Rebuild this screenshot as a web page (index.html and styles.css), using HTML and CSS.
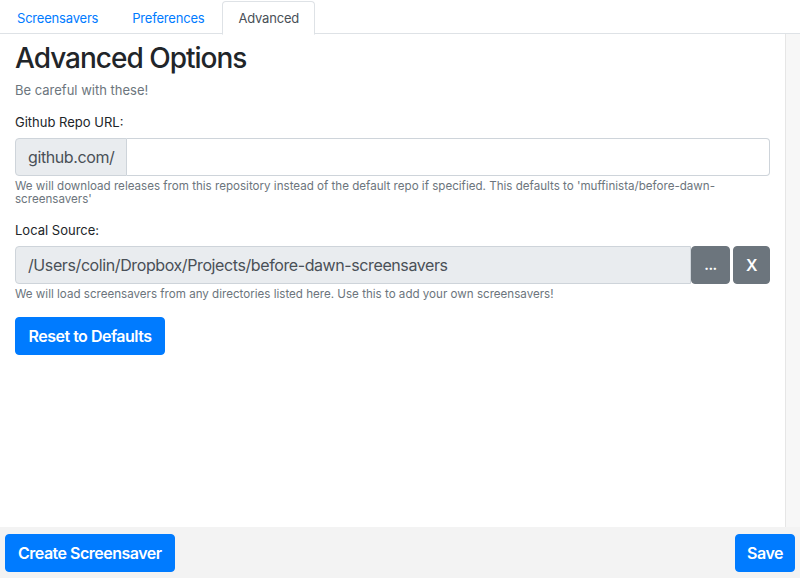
FILE: index.html
```html
<!DOCTYPE html>
<html>
<head>
<meta charset="utf-8">
<link rel="stylesheet" href="styles.css">
</head>
<body>
<div class="app">
  <ul class="tabs">
    <li class="tab"><a class="tab-link">Screensavers</a></li>
    <li class="tab"><a class="tab-link">Preferences</a></li>
    <li class="tab active"><a class="tab-link">Advanced</a></li>
  </ul>
  <div class="main">
    <div class="content">
      <h1 class="title">Advanced Options</h1>
      <p class="lead-muted">Be careful with these!</p>

      <div class="form-group">
        <label class="label">Github Repo URL:</label>
        <div class="input-group">
          <span class="prepend">github.com/</span>
          <input class="input" type="text" value="">
        </div>
        <small class="help">We will download releases from this repository instead of the default repo if specified. This defaults to 'muffinista/before-dawn-screensavers'</small>
      </div>

      <div class="form-group">
        <label class="label">Local Source:</label>
        <div class="input-group">
          <input class="input readonly" type="text" value="/Users/colin/Dropbox/Projects/before-dawn-screensavers" readonly>
          <button class="btn btn-gray btn-dots">...</button>
          <button class="btn btn-gray btn-x">X</button>
        </div>
        <small class="help">We will load screensavers from any directories listed here. Use this to add your own screensavers!</small>
      </div>

      <button class="btn btn-blue btn-reset">Reset to Defaults</button>
    </div>
    <div class="scrollbar"></div>
  </div>
  <div class="footer">
    <button class="btn btn-blue">Create Screensaver</button>
    <button class="btn btn-blue btn-save">Save</button>
  </div>
</div>
</body>
</html>
```
FILE: styles.css
```css
* { box-sizing: border-box; }
html, body { margin: 0; padding: 0; }
body {
  font-family: "Inter", "Liberation Sans", sans-serif;
  color: #212529;
  background: #fff;
}
.app {
  width: 800px;
  height: 578px;
  display: flex;
  flex-direction: column;
}
.tabs {
  list-style: none;
  margin: 0;
  padding: 1px 0 0 1px;
  display: flex;
  gap: 2px;
  border-bottom: 1px solid #dee2e6;
  height: 34px;
}
.tab { margin-bottom: -1px; }
.tab-link {
  display: block;
  padding: 7px 15px;
  font-size: 13px;
  line-height: 18px;
  letter-spacing: -0.2px;
  color: #007bff;
  border: 1px solid transparent;
  border-top-left-radius: 4px;
  border-top-right-radius: 4px;
}
.tab.active .tab-link {
  color: #495057;
  background: #fff;
  border-color: #dee2e6 #dee2e6 #fff;
}
.main {
  flex: 1;
  display: flex;
  min-height: 0;
}
.content {
  flex: 1;
  padding: 7px 15px 0 15px;
}
.scrollbar {
  width: 15px;
  background: #f7f7f7;
  border-left: 1px solid #e6e6e6;
}
.title {
  margin: 0;
  font-size: 28px;
  font-weight: 500;
  line-height: 34px;
  letter-spacing: -1px;
}
.lead-muted {
  margin: 6px 0 0;
  font-size: 13px;
  line-height: 18px;
  color: #6c757d;
}
.form-group { margin-top: 14px; }
.form-group + .form-group { margin-top: 15px; }
.label {
  display: block;
  font-size: 13px;
  line-height: 18px;
  margin-bottom: 7px;
}
.input-group {
  display: flex;
  height: 38px;
}
.prepend {
  display: flex;
  align-items: center;
  padding: 0 12px;
  font-size: 16px;
  letter-spacing: -0.4px;
  color: #495057;
  background: #e9ecef;
  border: 1px solid #ced4da;
  border-radius: 4px 0 0 4px;
}
.input {
  flex: 1;
  min-width: 0;
  font-family: inherit;
  font-size: 16px;
  letter-spacing: -0.4px;
  color: #495057;
  padding: 0 12px;
  border: 1px solid #ced4da;
  border-left: 0;
  border-radius: 0 4px 4px 0;
  background: #fff;
  outline: none;
}
.input.readonly {
  background: #e9ecef;
  border-left: 1px solid #ced4da;
  border-radius: 4px 0 0 4px;
}
.help {
  display: block;
  margin-top: 4px;
  font-size: 11.6px;
  line-height: 13px;
  color: #6c757d;
}
.btn {
  font-family: inherit;
  font-size: 16px;
  font-weight: 600;
  line-height: 24px;
  letter-spacing: -0.5px;
  padding: 6px 12px;
  border: 1px solid transparent;
  border-radius: 4px;
  color: #fff;
  cursor: pointer;
}
.btn-blue {
  background: #007bff;
  border-color: #007bff;
}
.btn-reset { margin-top: 16px; padding: 6px 12.5px; }
.btn-save { padding: 6px 11px; }
.btn-gray {
  background: #6c757d;
  border-color: #6c757d;
}
.btn-dots { width: 39px; padding: 0; font-size: 14px; font-weight: 700; }
.btn-x { width: 37px; padding: 0; margin-left: 3px; font-weight: 600; }
.footer {
  height: 51px;
  background: #f3f3f3;
  display: flex;
  justify-content: space-between;
  align-items: center;
  padding: 0 5px;
}
```
